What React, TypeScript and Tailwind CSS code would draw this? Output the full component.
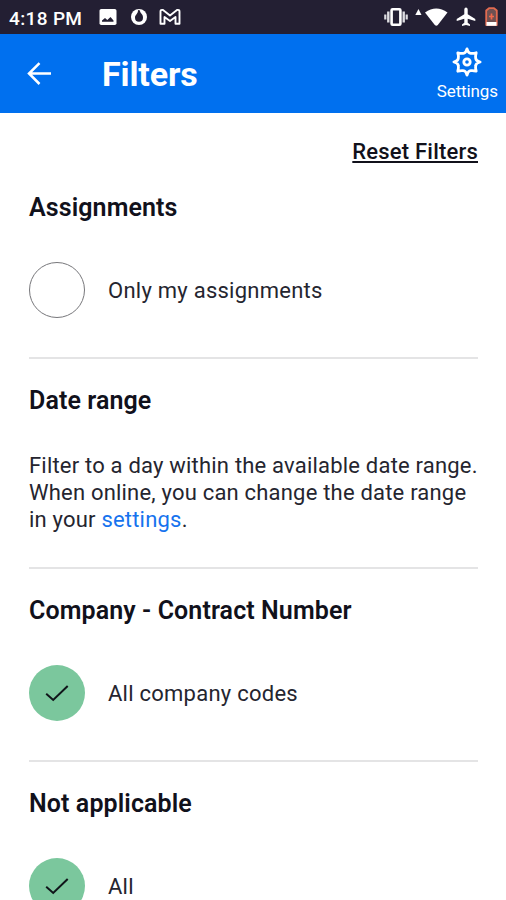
import type { ReactNode } from "react";

function StatusBar() {
  return (
    <div className="flex h-[34px] shrink-0 items-center bg-[#231f33] text-white">
      <span className="ml-[9px] mt-[3px] w-[75px] whitespace-nowrap text-[19px] font-medium leading-6 tracking-[0.35px]">
        4:18 PM
      </span>
      <svg className="ml-[15px] h-[18px] w-[18px]" viewBox="0 0 18 18">
        <rect x="0.5" y="1" width="17" height="16" rx="1.8" fill="#fff" />
        <path d="M3 13.8 V12.5 L6 10 L8.3 12 L11.5 9 L14.5 12.5 V13.8 Z" fill="#231f33" />
      </svg>
      <svg className="ml-[13px] h-[18px] w-[18px]" viewBox="0 0 18 18">
        <circle cx="9" cy="9" r="8" fill="#fff" />
        <path d="M10 2.5 C9.8 5 13.2 6 13 9.7 A4 4 0 0 1 5 9.7 C5 6.5 8.2 6 8 2 Z" fill="#231f33" />
      </svg>
      <svg className="ml-[11px] h-[18px] w-[22px]" viewBox="0 0 22 18" fill="none" stroke="#fff" strokeWidth="1.9" strokeLinejoin="round">
        <path d="M1.5 15.8 V3.5 Q1.5 1.5 4 2 L11 7.5 L18 2 Q20.5 1.5 20.5 3.5 V15.8 H16.5 V9 L11 13 L5.5 9 V15.8 Z" />
      </svg>
      {/* System icons */}
      <svg className="ml-[203px] h-[20px] w-[24px]" viewBox="0 0 24 20" fill="none" stroke="#fff">
        <rect x="7.6" y="2.2" width="8.8" height="15.6" rx="1" strokeWidth="2.6" />
        <path d="M4.3 4.5 V15.5 M19.7 4.5 V15.5" strokeWidth="2.4" stroke="#dddde2" />
        <path d="M1.3 7.5 V12.5 M22.7 7.5 V12.5" strokeWidth="2.2" stroke="#dddde2" />
      </svg>
      <svg className="ml-[7px] h-[20px] w-[33px]" viewBox="0 0 33 20" fill="#fff">
        <path d="M0.3 8 L3.5 2 L6.5 8 Z" />
        <path d="M10 5.5 Q21.3 -2.5 32.5 5.5 L22.8 18 Q21.3 19.5 19.8 18 Z" />
      </svg>
      <svg className="ml-[8px] h-[20px] w-[20px]" viewBox="0 0 20 20" fill="#fff">
        <path d="M10 0.5 Q11.6 0.5 11.7 2.5 V7.2 L19.3 12 V14 L11.7 11.8 V15.8 L14 17.6 V19 L10 18 L6 19 V17.6 L8.3 15.8 V11.8 L0.7 14 V12 L8.3 7.2 V2.5 Q8.4 0.5 10 0.5 Z" />
      </svg>
      <svg className="ml-[9px] h-[20px] w-[13px]" viewBox="0 0 13 20">
        <path d="M4 1.2 H9 L11.8 3.5 V18 H1.2 V3.5 Z" fill="#6d5052" stroke="#e16a50" strokeWidth="1.8" strokeLinejoin="round" />
        <path d="M1.5 15 H11.5 V18.8 H1.5 Z" fill="#fff" />
        <path d="M6.5 6.5 V12.5 M4 9.5 H9" stroke="#f0694c" strokeWidth="1.7" />
      </svg>
    </div>
  );
}

function Header() {
  return (
    <header className="flex h-[79px] shrink-0 items-center bg-[#0070ef] text-white">
      <button className="ml-[26px]" aria-label="Back">
        <svg className="h-6 w-[26px]" viewBox="0 0 26 24" fill="none" stroke="#fff" strokeWidth="2.5">
          <path d="M25 11.5 H3 M13.5 1.2 L3 11.5 L13.5 22" />
        </svg>
      </button>
      <h1 className="ml-[50px] text-[34px] font-bold leading-10 tracking-[-0.1px]">Filters</h1>
      <button className="ml-auto mr-[8px] flex flex-col items-center">
        <svg className="h-[30px] w-[30px]" viewBox="0 0 30 30" fill="none" stroke="#fff" strokeWidth="2.8" strokeLinejoin="round">
          <path d="M15 1.9 Q16.2 6.2 18.6 6.3 Q20.8 6.8 24.2 5.8 Q23.2 9.2 23.7 11.4 Q23.8 13.8 28.1 15 Q23.8 16.2 23.7 18.6 Q23.2 20.8 24.2 24.2 Q20.8 23.2 18.6 23.7 Q16.2 23.8 15 28.1 Q13.8 23.8 11.4 23.7 Q9.2 23.2 5.8 24.2 Q6.8 20.8 6.3 18.6 Q6.2 16.2 1.9 15 Q6.2 13.8 6.3 11.4 Q6.8 9.2 5.8 5.8 Q9.2 6.8 11.4 6.3 Q13.8 6.2 15 1.9 Z" />
          <circle cx="15" cy="15" r="3.2" strokeWidth="2.8" />
        </svg>
        <span className="mt-[4px] text-[17px] leading-5 tracking-[-0.1px]">Settings</span>
      </button>
    </header>
  );
}

function Section({ title, children }: { title: string; children: ReactNode }) {
  return (
    <section className="border-b-2 border-[#e4e4e5] pt-[26px]">
      <h2 className="whitespace-nowrap text-[25px] font-semibold leading-8 tracking-[0.1px]">{title}</h2>
      {children}
    </section>
  );
}

function Option({ label, checked = false }: { label: string; checked?: boolean }) {
  return (
    <div className="flex items-center pb-[39px] pt-[38px]">
      {checked ? (
        <span className="flex h-14 w-14 items-center justify-center rounded-full bg-[#7bc79d]">
          <svg className="h-[18px] w-6" viewBox="0 0 24 18" fill="none" stroke="#10151a" strokeWidth="2">
            <path d="M1.2 9.8 L8.2 16 L22.7 2" />
          </svg>
        </span>
      ) : (
        <span className="h-14 w-14 rounded-full border border-[#77777b]" />
      )}
      <span className="ml-[23px] mt-[2px] text-[22px] leading-7 tracking-[0.25px] text-[#25252f]">{label}</span>
    </div>
  );
}

export default function App() {
  return (
    <div className="flex h-[900px] w-[506px] flex-col overflow-hidden bg-white font-['Roboto',sans-serif] text-[#11111b]">
      <StatusBar />
      <Header />
      <main className="pl-[29px] pr-[28px]">
        <div className="flex h-[53px] justify-end pt-[25px]">
          <button className="h-7 text-[22px] font-medium leading-7 tracking-[0.2px] underline decoration-2 underline-offset-2">
            Reset Filters
          </button>
        </div>
        <Section title="Assignments">
          <Option label="Only my assignments" />
        </Section>
        <Section title="Date range">
          <p className="whitespace-nowrap pb-[34px] pt-[35px] text-[22px] leading-[27px] tracking-[0.2px] text-[#25252f]">
            Filter to a day within the available date range.
            <br />
            When online, you can change the date range
            <br />
            in your <a className="text-[#1673ee]">settings</a>.
          </p>
        </Section>
        <Section title="Company - Contract Number">
          <Option label="All company codes" checked />
        </Section>
        <Section title="Not applicable">
          <Option label="All" checked />
        </Section>
      </main>
    </div>
  );
}
